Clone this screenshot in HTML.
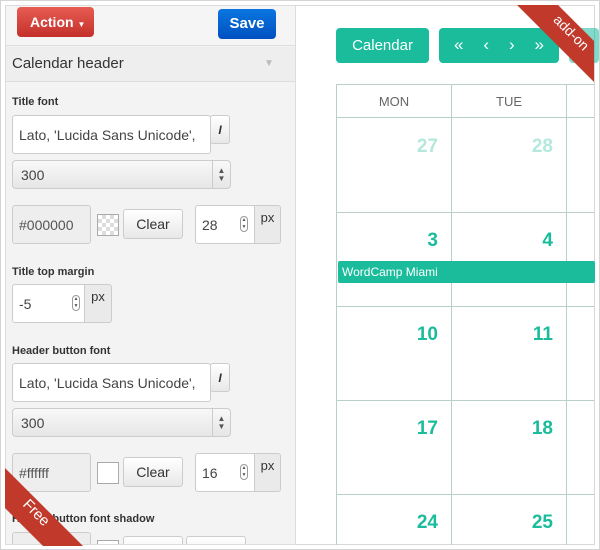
<!DOCTYPE html>
<html><head><style>
*{box-sizing:border-box;margin:0;padding:0}
body{width:600px;height:550px;background:#fff;position:relative;overflow:hidden;font-family:"Liberation Sans",Arial,sans-serif}
.abs{position:absolute}
#outer{left:0;top:0;width:600px;height:550px;border:1px solid #d4d4d4}
#left{left:5px;top:5px;width:291px;height:540px;background:#f3f3f3;border:1px solid #dcdcdc;overflow:hidden}
.lbl{position:absolute;left:6px;font-weight:bold;font-size:11px;color:#333}
.inp{position:absolute;background:#fff;border:1px solid #ccc;border-radius:3px;font-size:14px;color:#444;padding-left:6px;display:flex;align-items:center}
.sel{position:absolute;border:1px solid #ccc;border-radius:4px;background:linear-gradient(#f8f8f8,#e6e6e6);font-size:14px;color:#444;padding-left:8px;display:flex;align-items:center}
.btn{position:absolute;border:1px solid #ccc;border-radius:3px;background:linear-gradient(#fff,#e8e8e8);font-size:14px;color:#333;display:flex;align-items:center;justify-content:center}
.ro{position:absolute;background:#eee;border:1px solid #ccc;border-radius:3px;font-size:14px;color:#555;padding-left:6px;display:flex;align-items:center}
.sw{position:absolute;width:22px;height:22px;border:1px solid #aaa;background:#fff}
.px{position:absolute;background:#eaeaea;border:1px solid #ccc;border-left:none;border-radius:0 3px 3px 0;font-size:13px;color:#333;text-align:center;padding-top:4px}
.spin{position:absolute;width:8px;height:16px;border:1px solid #999;border-radius:4px;font-size:5px;line-height:7px;text-align:center;color:#555}
.cal{font-family:"Liberation Sans",sans-serif;color:#1abc9c;font-size:19px;font-weight:bold;position:absolute;text-align:right;width:100px}
.teal{background:#1abc9c}
</style></head><body>
<div class="abs" id="outer"></div>
<div class="abs" id="left">
  <div class="abs" style="left:0;top:0;width:291px;height:40px;background:#f5f5f5;border-bottom:1px solid #ddd"></div>
  <div class="abs" style="left:11px;top:1px;width:77px;height:30px;border-radius:4px;background:linear-gradient(#e65c52,#c4302b);color:#fff;font-weight:bold;font-size:14px;line-height:30px;padding-left:13px">Action <span style="font-size:8px">▼</span></div>
  <div class="abs" style="left:212px;top:3px;width:58px;height:30px;border-radius:4px;background:linear-gradient(#0a76e0,#0050c0);color:#fff;font-weight:bold;font-size:15px;line-height:30px;text-align:center">Save</div>
  <div class="abs" style="left:0;top:41px;width:291px;height:35px;background:#eee;border-bottom:1px solid #ddd;font-size:15px;color:#333;line-height:33px;padding-left:6px">Calendar header<span style="position:absolute;left:258px;top:0;color:#bbb;font-size:10px">▼</span></div>
  <div class="lbl" style="top:90px">Title font</div>
  <div class="inp" style="left:6px;top:109px;width:199px;height:39px">Lato, 'Lucida Sans Unicode',</div>
  <div class="btn" style="left:204px;top:109px;width:20px;height:29px;font-style:italic;font-weight:bold;font-size:12px">I</div>
  <div class="sel" style="left:6px;top:154px;width:219px;height:29px">300<span style="position:absolute;right:0;top:0;width:18px;height:27px;border-left:1px solid #ccc;font-size:8px;line-height:8px;text-align:center;padding-top:6px;color:#555">▲<br>▼</span></div>
  <div class="ro" style="left:6px;top:199px;width:79px;height:39px">#000000</div>
  <div class="sw" style="left:91px;top:208px;background:repeating-conic-gradient(#ddd 0 25%,#fff 0 50%) 0 0/8px 8px"></div>
  <div class="btn" style="left:117px;top:203px;width:60px;height:30px">Clear</div>
  <div class="inp" style="left:189px;top:199px;width:60px;height:39px;border-radius:3px 0 0 3px">28</div>
  <div class="spin" style="left:234px;top:210px">▲<br>▼</div>
  <div class="px" style="left:249px;top:199px;width:26px;height:39px">px</div>
  <div class="lbl" style="top:260px">Title top margin</div>
  <div class="inp" style="left:6px;top:278px;width:73px;height:39px;border-radius:3px 0 0 3px">-5</div>
  <div class="spin" style="left:66px;top:289px">▲<br>▼</div>
  <div class="px" style="left:79px;top:278px;width:27px;height:39px">px</div>
  <div class="lbl" style="top:339px">Header button font</div>
  <div class="inp" style="left:6px;top:357px;width:199px;height:39px">Lato, 'Lucida Sans Unicode',</div>
  <div class="btn" style="left:204px;top:357px;width:20px;height:29px;font-style:italic;font-weight:bold;font-size:12px">I</div>
  <div class="sel" style="left:6px;top:402px;width:219px;height:29px">300<span style="position:absolute;right:0;top:0;width:18px;height:27px;border-left:1px solid #ccc;font-size:8px;line-height:8px;text-align:center;padding-top:6px;color:#555">▲<br>▼</span></div>
  <div class="ro" style="left:6px;top:447px;width:79px;height:39px">#ffffff</div>
  <div class="sw" style="left:91px;top:456px"></div>
  <div class="btn" style="left:117px;top:451px;width:60px;height:30px">Clear</div>
  <div class="inp" style="left:189px;top:447px;width:60px;height:39px;border-radius:3px 0 0 3px">16</div>
  <div class="spin" style="left:234px;top:458px">▲<br>▼</div>
  <div class="px" style="left:249px;top:447px;width:26px;height:39px">px</div>
  <div class="lbl" style="top:507px">Header button font shadow</div>
  <div class="ro" style="left:6px;top:526px;width:79px;height:30px"></div>
  <div class="sw" style="left:91px;top:534px"></div>
  <div class="btn" style="left:117px;top:530px;width:60px;height:30px"></div>
  <div class="btn" style="left:180px;top:530px;width:60px;height:30px"></div>
</div>
<div class="abs" style="left:295px;top:5px;width:300px;height:540px;border:1px solid #d8d8d8;border-left:none"></div>
<div class="abs teal" style="left:336px;top:28px;width:93px;height:35px;border-radius:4px;color:#fff;font-size:15px;line-height:35px;text-align:center">Calendar</div>
<div class="abs teal" style="left:439px;top:28px;width:120px;height:35px;border-radius:4px;color:#fff;font-size:17px;line-height:34px;display:flex;justify-content:space-around;padding:0 5px">
<span>«</span><span>‹</span><span>›</span><span>»</span></div>
<div class="abs teal" style="left:569px;top:28px;width:30px;height:35px;border-radius:4px;opacity:.55"></div>
<svg class="abs" style="left:0;top:0" width="600" height="550">
<g stroke="#b9cfca" stroke-width="1" fill="none">
<path d="M336.5 84V545M451.5 84V545M566.5 84V545M336 84.5H594M336 117.5H594M336 212.5H594M336 306.5H594M336 400.5H594M336 494.5H594"/>
</g>
<text x="394" y="106" font-family="Liberation Sans" font-size="13" fill="#666" text-anchor="middle">MON</text>
<text x="509" y="106" font-family="Liberation Sans" font-size="13" fill="#666" text-anchor="middle">TUE</text>
<rect x="338" y="261" width="257" height="22" rx="2" fill="#1abc9c"/>
<text x="342" y="276" font-family="Liberation Sans" font-size="12" fill="#fff">WordCamp Miami</text>
<g font-family="Liberation Sans" font-size="19" font-weight="bold" fill="#1abc9c" text-anchor="end">
<text x="438" y="152" fill="#b4e8dc">27</text><text x="553" y="152" fill="#b4e8dc">28</text>
<text x="438" y="246">3</text><text x="553" y="246">4</text>
<text x="438" y="340">10</text><text x="553" y="340">11</text>
<text x="438" y="434">17</text><text x="553" y="434">18</text>
<text x="438" y="528">24</text><text x="553" y="528">25</text>
</g>
<polygon points="517,5 558,5 594,41 594,82" fill="#c0392b"/>
<text x="568" y="36" font-family="Liberation Sans" font-size="14" fill="#fff" text-anchor="middle" transform="rotate(45 568 36)">add-on</text>
<polygon points="5,468 83,546 43,546 5,508" fill="#c0392b"/>
<text x="33" y="516" font-family="Liberation Sans" font-size="15" fill="#fff" text-anchor="middle" transform="rotate(45 33 516)">Free</text>
</svg>
</body></html>
